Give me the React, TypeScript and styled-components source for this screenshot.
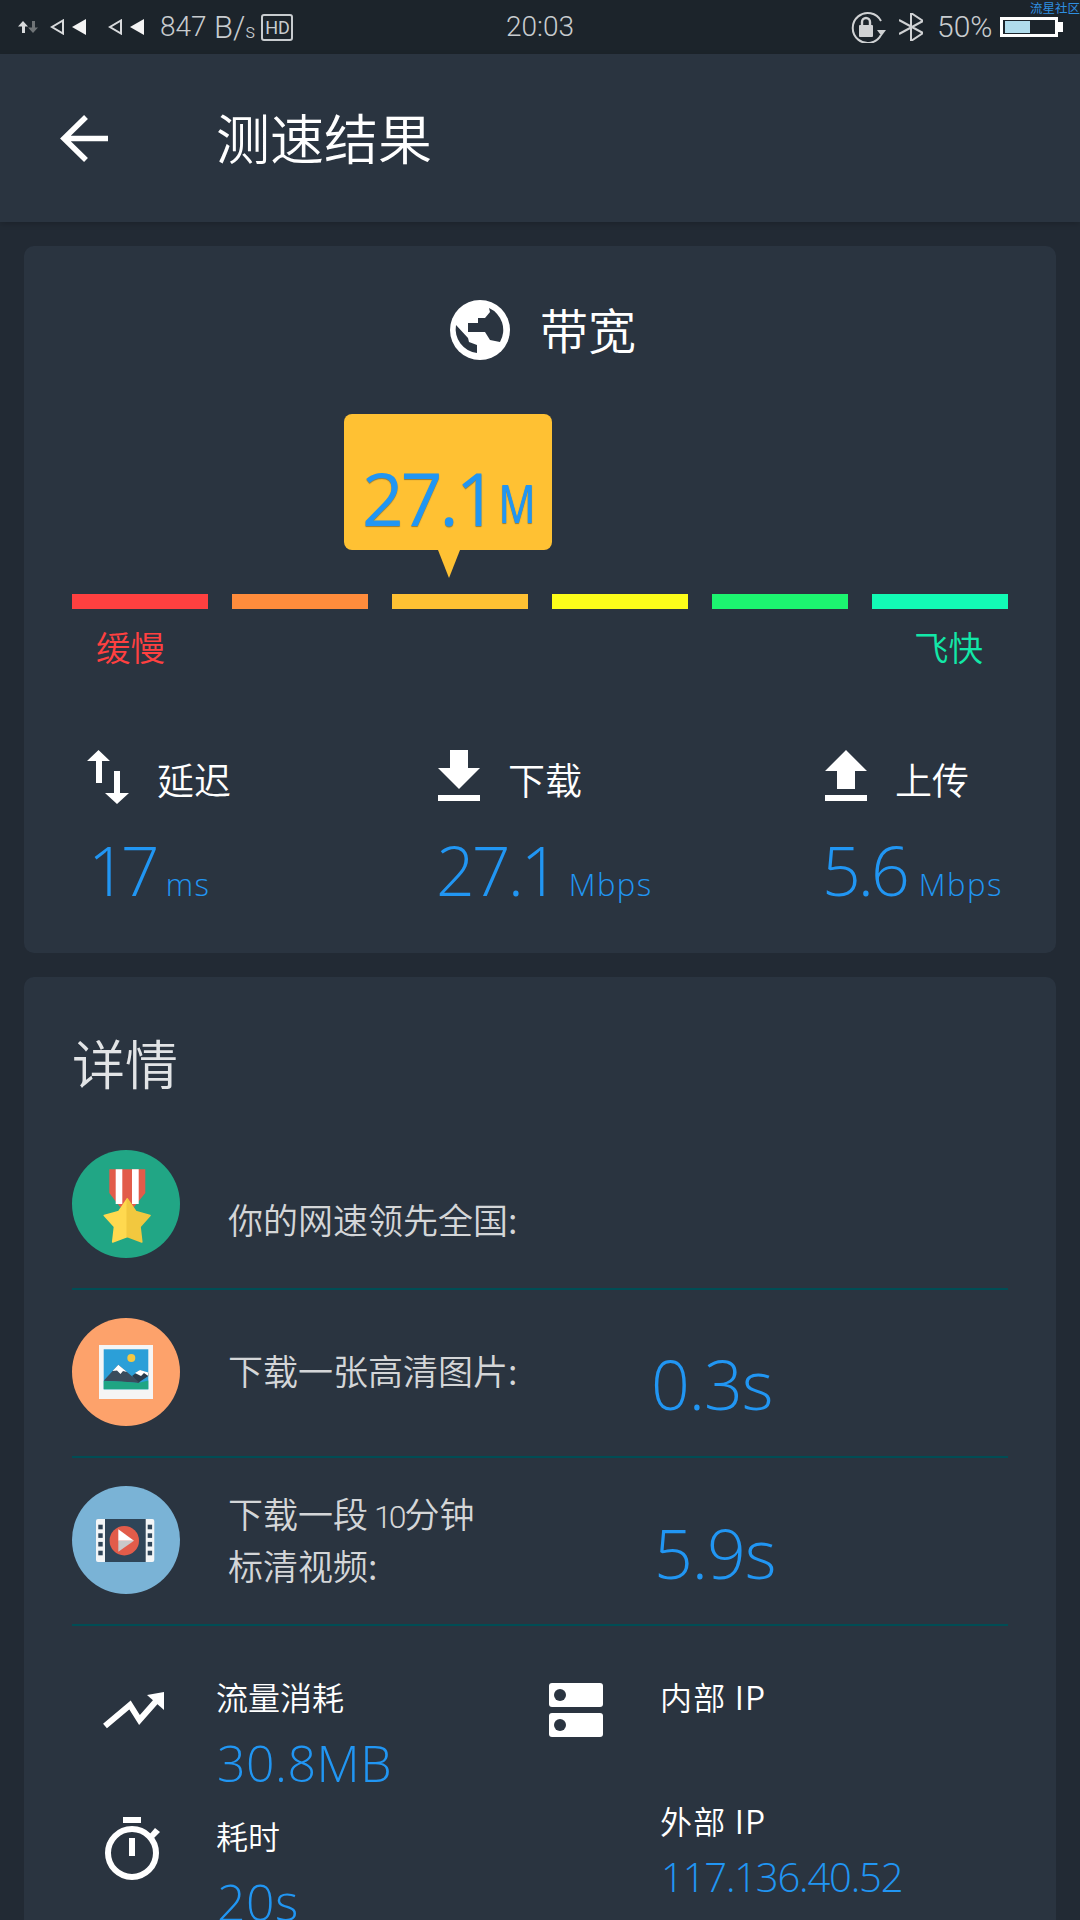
import React from "react";
import styled, { createGlobalStyle } from "styled-components";

const CJK = `"Noto Sans CJK SC", "Noto Sans", sans-serif`;
const NUM = `"Open Sans", "Noto Sans", sans-serif`;
const BLUE = "#2196f3";
const CARD = "#2a3440";

const Global = createGlobalStyle`
  html, body { margin: 0; padding: 0; background: #222a34; }
  * { box-sizing: border-box; }
`;

const Screen = styled.div`
  width: 1080px; height: 1920px; overflow: hidden; background: #222a34;
  font-family: ${CJK}; color: #fff; font-weight: 350;
`;

/* status bar */
const StatusBar = styled.div`
  height: 54px; background: #1c242b; display: flex; align-items: center;
  padding: 0 22px 0 18px; position: relative; color: #c8cccf;
`;
const StatusLeft = styled.div`display: flex; align-items: center; flex: 1;`;
const StatusIcon = styled.svg<{ $ml?: number }>`margin-left: ${p => p.$ml ?? 0}px; display: block; flex: none;`;
const Speed = styled.span`
  font: 300 28px/1 "Roboto", sans-serif; margin-left: 16px; width: 45px;
`;
const SpeedUnit = styled.span`
  font: 300 31px/1 "Roboto", sans-serif; margin-left: 9px; display: flex; align-items: baseline;
  & > small { font-size: 20px; }
`;
const HdBadge = styled.span`
  width: 32px; height: 27px; margin-left: 6px; border: 2px solid #c8cccf; border-radius: 3px;
  font: 400 18px/23px "Roboto", sans-serif; text-align: center;
`;
const Clock = styled.span`
  font: 300 28px/1 "Roboto", sans-serif; width: 72px; text-align: center; margin-right: 274px;
`;
const Percent = styled.span`font: 300 30px/1 "Roboto", sans-serif; margin-left: 14px; width: 53px;`;
const Battery = styled.div`
  width: 58px; height: 20px; border: 3px solid #fff; margin-left: 10px; position: relative; background: #1c242b;
  &::before { content: ""; position: absolute; left: 2px; top: 1px; bottom: 1px; width: 25px; background: #b0dcec; }
  &::after { content: ""; position: absolute; right: -8px; top: 2px; width: 5px; height: 10px; background: #fff; }
`;
const Watermark = styled.span`
  position: absolute; right: 0; top: 0; font: 400 12.5px/15px ${CJK}; color: #2f8fe0;
`;

/* header */
const Header = styled.header`
  height: 168px; background: ${CARD}; display: flex; align-items: center; padding-left: 60px;
  box-shadow: 0 2px 6px rgba(0,0,0,.18); position: relative;
`;
const Title = styled.h1`
  margin: -3px 0 0 108px; font-size: 54px; line-height: 60px; font-weight: 350;
`;

/* cards */
const Content = styled.main`display: flex; flex-direction: column; gap: 24px; padding: 24px 24px 0;`;
const Card = styled.section`background: ${CARD}; border-radius: 10px; padding: 0 48px;`;
const SpeedCard = styled(Card)`height: 707px; padding-top: 54px;`;
const DetailCard = styled(Card)`padding-top: 55px; height: 1000px;`;

const TitleRow = styled.div`display: flex; align-items: center; justify-content: center; gap: 30px; padding-left: 6px;`;
const CardTitle = styled.h2`margin: -2px 0 2px; font-size: 48px; line-height: 60px; font-weight: 350;`;

const Bubble = styled.div`
  position: relative; width: 208px; height: 136px; margin: 54px 0 0 272px; background: #ffc133; border-radius: 8px;
  display: flex; align-items: flex-end; padding: 0 0 14px 18px; color: ${BLUE};
  text-shadow: 0 1px 1px rgba(20,40,60,.45); font-family: ${NUM};
  &::after {
    content: ""; position: absolute; top: 100%; left: 94px;
    border-left: 11px solid transparent; border-right: 11px solid transparent; border-top: 28px solid #ffc133;
  }
`;
const BubbleValue = styled.span`font-size: 73px; line-height: 76px; font-weight: 400; font-stretch: 88%; letter-spacing: -3px;`;
const BubbleUnit = styled.span`font-size: 52px; line-height: 66px; font-weight: 400; margin-left: 4px; font-stretch: 80%;`;

const Scale = styled.div`display: grid; grid-template-columns: repeat(6, 136px); gap: 24px; margin-top: 44px;`;
const Segment = styled.div<{ $c: string }>`height: 15px; background: ${p => p.$c};`;
const Ends = styled.div`display: flex; justify-content: space-between; padding: 0 25px 0 24px; margin-top: 17px; margin-bottom: 2px;`;
const End = styled.span<{ $c: string }>`font-size: 34.5px; line-height: 40px; color: ${p => p.$c};`;

const Stats = styled.div`display: grid; grid-template-columns: 351px 387px 1fr; margin: 84px 0 0 15px;`;
const Stat = styled.div`display: flex; flex-direction: column;`;
const StatHead = styled.div`display: flex; align-items: center; gap: 28px; height: 54px;`;
const StatLabel = styled.span`font-size: 37px; line-height: 50px; margin-top: 3px;`;
const StatValue = styled.div<{ $shift?: number }>`
  display: flex; align-items: baseline; margin: 26px 0 0 ${p => p.$shift ?? 0}px; color: ${BLUE}; font-family: ${NUM};
`;
const BigNumber = styled.span<{ $tight?: boolean }>`
  font-size: 68px; line-height: 80px; font-weight: 300; letter-spacing: ${p => (p.$tight ? -6 : -3)}px;
`;
const Unit = styled.span`font-size: 31px; font-weight: 300; margin-left: 12px; letter-spacing: 1.5px;`;

/* details */
const DetailTitle = styled.h2`margin: 0 0 30px; font-size: 53px; line-height: 60px; font-weight: 350; color: #e2e4e6;`;
const Row = styled.div`
  height: 168px; padding-top: 28px; border-bottom: 2px solid #004d55;
  display: grid; grid-template-columns: 108px 425px auto; align-items: start;
`;
const Badge = styled.div<{ $c: string }>`width: 108px; height: 108px; border-radius: 50%; background: ${p => p.$c};`;
const RowLabel = styled.div<{ $top: number }>`
  margin: ${p => p.$top}px 0 0 48px; font-size: 35px; line-height: 52px; color: #d4d6d8; white-space: nowrap;
`;
const NarrowDigits = styled.span`font: 300 32px/1 "Roboto", sans-serif; letter-spacing: -3px; margin: 0 1px 0 6px;`;
const RowValue = styled.div<{ $top: number; $left: number }>`
  margin: ${p => p.$top}px 0 0 ${p => p.$left}px; color: ${BLUE}; font: 300 68px/80px ${NUM}; letter-spacing: -1px;
`;

const Info = styled.div`display: grid; grid-template-columns: 447px 1fr; padding: 52px 0 0 30px;`;
const InfoColumn = styled.div`display: flex; flex-direction: column;`;
const InfoItem = styled.div<{ $h: number; $icon: number }>`
  display: grid; grid-template-columns: ${p => p.$icon}px 1fr; height: ${p => p.$h}px;
`;
const InfoText = styled.div`display: flex; flex-direction: column;`;
const InfoLabel = styled.span<{ $wide?: boolean }>`
  font-size: 32px; line-height: 36px; margin-bottom: 4px; white-space: nowrap; letter-spacing: ${p => (p.$wide ? "1.2px" : "0")};
`;
const InfoValue = styled.span<{ $small?: boolean }>`
  color: ${BLUE}; font-family: ${NUM}; font-weight: 300; white-space: nowrap;
  font-size: ${p => (p.$small ? 40 : 50)}px; line-height: 60px;
  margin: ${p => (p.$small ? 5 : 15)}px 0 0 1px; letter-spacing: ${p => (p.$small ? -1.2 : 0.5)}px;
`;
const IconSlot = styled.div<{ $x?: number; $y?: number }>`padding: ${p => p.$y ?? 0}px 0 0 ${p => p.$x ?? 0}px;`;
const Glyph = styled.svg`display: block;`;

const SEGMENTS = ["#ff4040", "#ff8c3c", "#ffc133", "#fdfd1a", "#1cf570", "#12fbb5"];

const Medal = () => (
  <Glyph width="108" height="108" viewBox="0 0 108 108">
    <path d="M37.3 19.3H73.3V43L62 57H48L37.3 43Z" fill="#e25c4a" />
    <path d="M43.7 19.3H50.3V54H43.7ZM60 19.3H66.7V54H60Z" fill="#fff" />
    <path d="M55.3 49L46.8 61.5L32.3 65.5L42.5 76.6L40.7 92L55.3 86.5Z" fill="#ffd94f" stroke="#ffd94f" strokeWidth="1.6" strokeLinejoin="round" />
    <path d="M55.3 49L63.8 61.5L78 65.5L68 76.6L69.8 92L55.3 86.5Z" fill="#f2c83f" stroke="#f2c83f" strokeWidth="1.6" strokeLinejoin="round" />
  </Glyph>
);

const Picture = () => (
  <Glyph width="108" height="108" viewBox="0 0 108 108">
    <rect x="27" y="27" width="54" height="54" fill="#f5f5f5" />
    <rect x="31.7" y="31.3" width="44.6" height="40" fill="#2b9fd8" />
    <circle cx="59.3" cy="40" r="4" fill="#f5c842" />
    <path d="M66 65L76.3 58V55L68 52L60 58Z" fill="#2b3c4c" />
    <path d="M31.7 62.7L46.3 46.7L68 65Z" fill="#3a4c5c" />
    <path d="M40.5 53L46.3 46.7L55 54L51 53L48.5 56L45 52.5Z M63 55L68 52L76.3 54.5V58L72 55L69 58Z" fill="#fff" />
    <path d="M31.7 63L50 63.5L66 65L76.3 62.5V71.3H31.7Z" fill="#1fa583" />
  </Glyph>
);

const Film = () => (
  <Glyph width="108" height="108" viewBox="0 0 108 108">
    <rect x="24" y="33" width="58.3" height="43" rx="2" fill="#f2f5f7" />
    <rect x="33" y="33" width="40.7" height="43" fill="#2f4558" />
    {[38.7, 47.3, 55.9, 64.7].map(y => (
      <React.Fragment key={y}>
        <rect x="26.3" y={y} width="4.4" height="4.6" fill="#2f4558" />
        <rect x="75.7" y={y} width="4.4" height="4.6" fill="#2f4558" />
      </React.Fragment>
    ))}
    <circle cx="52.3" cy="54.7" r="14.7" fill="#e25c4a" />
    <path d="M46.3 43.3L62 54.7H46.3Z" fill="#fff" />
    <path d="M46.3 65.7L62 54.7H46.3Z" fill="#c9c9c9" />
  </Glyph>
);

export default function App() {
  return (
    <Screen>
      <Global />
      <StatusBar>
        <StatusLeft>
          <StatusIcon width="20" height="12" viewBox="0 0 20 12">
            <path d="M5 0L10 5.5H7V12H4V5.5H0Z" fill="#d8dadc" />
            <path d="M15 12L20 6.5H17V0H14V6.5H10Z" fill="#6f7477" />
          </StatusIcon>
          <StatusIcon $ml={12} width="36" height="16" viewBox="0 0 36 16">
            <path d="M13 1.5V14.5L2 8Z" fill="none" stroke="#d8dadc" strokeWidth="2" />
            <path d="M36 0V16L22 8Z" fill="#f4f4f4" />
          </StatusIcon>
          <StatusIcon $ml={22} width="36" height="16" viewBox="0 0 36 16">
            <path d="M13 1.5V14.5L2 8Z" fill="none" stroke="#d8dadc" strokeWidth="2" />
            <path d="M36 0V16L22 8Z" fill="#f4f4f4" />
          </StatusIcon>
          <Speed>847</Speed>
          <SpeedUnit>B/<small>s</small></SpeedUnit>
          <HdBadge>HD</HdBadge>
        </StatusLeft>
        <Clock>20:03</Clock>
        <StatusIcon width="36" height="32" viewBox="0 0 36 32">
          <path d="M31 24A15 15 0 1 1 31 10" fill="none" stroke="#d0d2d4" strokeWidth="2" />
          <path d="M27 19H36L31.5 25Z" fill="#d0d2d4" />
          <rect x="9" y="14" width="14" height="12" rx="1" fill="#d0d2d4" />
          <path d="M12 14V11A4 4 0 0 1 20 11V14" fill="none" stroke="#d0d2d4" strokeWidth="2.4" />
        </StatusIcon>
        <StatusIcon $ml={13} width="24" height="28" viewBox="0 0 24 28">
          <path d="M0 7L24 20L12 28V0L24 8L0 21" fill="none" stroke="#d0d2d4" strokeWidth="2" />
        </StatusIcon>
        <Percent>50%</Percent>
        <Battery />
        <Watermark>流星社区</Watermark>
      </StatusBar>

      <Header>
        <Glyph width="48" height="47" viewBox="0 0 48 47">
          <path d="M48 23.5H4M26 2L4 23.5L26 45" fill="none" stroke="#fff" strokeWidth="5.5" />
        </Glyph>
        <Title>测速结果</Title>
      </Header>

      <Content>
        <SpeedCard>
          <TitleRow>
            <Glyph width="60" height="60" viewBox="0 0 60 60">
              <circle cx="30" cy="30" r="30" fill="#fff" />
              <path d="M6 25L18 38L19 42L27 45L27 53A24 24 0 0 1 6 25Z" fill={CARD} />
              <path d="M39 8L40 12L35 18L28 18L28 23L18 23L18 32L35 32L40 40L50 42A24 24 0 0 0 39 8Z" fill={CARD} />
            </Glyph>
            <CardTitle>带宽</CardTitle>
          </TitleRow>
          <Bubble>
            <BubbleValue>27.1</BubbleValue>
            <BubbleUnit>M</BubbleUnit>
          </Bubble>
          <Scale>
            {SEGMENTS.map(c => <Segment key={c} $c={c} />)}
          </Scale>
          <Ends>
            <End $c="#ff4040">缓慢</End>
            <End $c="#12e8a8">飞快</End>
          </Ends>
          <Stats>
            <Stat>
              <StatHead>
                <Glyph width="42" height="54" viewBox="0 0 42 54">
                  <path d="M11.5 0L23 11H15V33H9V11H0Z M30 54L18 43H27V21H33V43H42Z" fill="#fff" />
                </Glyph>
                <StatLabel>延迟</StatLabel>
              </StatHead>
              <StatValue $shift={1}>
                <BigNumber $tight>17</BigNumber>
                <Unit>ms</Unit>
              </StatValue>
            </Stat>
            <Stat>
              <StatHead>
                <Glyph width="42" height="54" viewBox="0 0 42 54">
                  <path d="M12 0H30V18H42L21 39L0 18H12ZM0 45H42V51H0Z" fill="#fff" />
                </Glyph>
                <StatLabel>下载</StatLabel>
              </StatHead>
              <StatValue $shift={-2}>
                <BigNumber>27.1</BigNumber>
                <Unit>Mbps</Unit>
              </StatValue>
            </Stat>
            <Stat>
              <StatHead>
                <Glyph width="42" height="54" viewBox="0 0 42 54">
                  <path d="M21 0L42 21H30V39H12V21H0ZM0 45H42V51H0Z" fill="#fff" />
                </Glyph>
                <StatLabel>上传</StatLabel>
              </StatHead>
              <StatValue $shift={-3}>
                <BigNumber>5.6</BigNumber>
                <Unit>Mbps</Unit>
              </StatValue>
            </Stat>
          </Stats>
        </SpeedCard>

        <DetailCard>
          <DetailTitle>详情</DetailTitle>
          <Row>
            <Badge $c="#21a685"><Medal /></Badge>
            <RowLabel $top={43}>你的网速领先全国:</RowLabel>
          </Row>
          <Row>
            <Badge $c="#fda26b"><Picture /></Badge>
            <RowLabel $top={26}>下载一张高清图片:</RowLabel>
            <RowValue $top={26} $left={46}>0.3s</RowValue>
          </Row>
          <Row>
            <Badge $c="#7ab3d6"><Film /></Badge>
            <RowLabel $top={1}>下载一段<NarrowDigits>10</NarrowDigits>分钟<br />标清视频:</RowLabel>
            <RowValue $top={27} $left={49}>5.9s</RowValue>
          </Row>
          <Info>
            <InfoColumn>
              <InfoItem $h={139} $icon={114}>
                <IconSlot $y={12}>
                  <Glyph width="62" height="40" viewBox="0 0 62 40">
                    <path d="M3 36L28 15L37.5 30L56 9" fill="none" stroke="#fff" strokeWidth="6" />
                    <path d="M45 5L62 2V20Z" fill="#fff" />
                  </Glyph>
                </IconSlot>
                <InfoText>
                  <InfoLabel>流量消耗</InfoLabel>
                  <InfoValue>30.8MB</InfoValue>
                </InfoText>
              </InfoItem>
              <InfoItem $h={139} $icon={114}>
                <IconSlot $x={3}>
                  <Glyph width="56" height="64" viewBox="0 0 56 64">
                    <rect x="18" y="0" width="18" height="6" fill="#fff" />
                    <circle cx="27" cy="36" r="24" fill="none" stroke="#fff" strokeWidth="6" />
                    <rect x="24" y="21" width="6" height="18" fill="#fff" />
                    <path d="M44 18L50 11L55 15L49 21Z" fill="#fff" />
                  </Glyph>
                </IconSlot>
                <InfoText>
                  <InfoLabel>耗时</InfoLabel>
                  <InfoValue>20s</InfoValue>
                </InfoText>
              </InfoItem>
            </InfoColumn>
            <InfoColumn>
              <InfoItem $h={124} $icon={111}>
                <IconSlot $y={5}>
                  <Glyph width="54" height="54" viewBox="0 0 54 54">
                    <rect width="54" height="24" y="0" rx="3" fill="#fff" />
                    <rect width="54" height="24" y="30" rx="3" fill="#fff" />
                    <ellipse cx="11" cy="12" rx="6" ry="6" fill={CARD} />
                    <ellipse cx="11" cy="42" rx="6" ry="6" fill={CARD} />
                  </Glyph>
                </IconSlot>
                <InfoText>
                  <InfoLabel $wide>内部 IP</InfoLabel>
                </InfoText>
              </InfoItem>
              <InfoItem $h={124} $icon={111}>
                <span />
                <InfoText>
                  <InfoLabel $wide>外部 IP</InfoLabel>
                  <InfoValue $small>117.136.40.52</InfoValue>
                </InfoText>
              </InfoItem>
            </InfoColumn>
          </Info>
        </DetailCard>
      </Content>
    </Screen>
  );
}
